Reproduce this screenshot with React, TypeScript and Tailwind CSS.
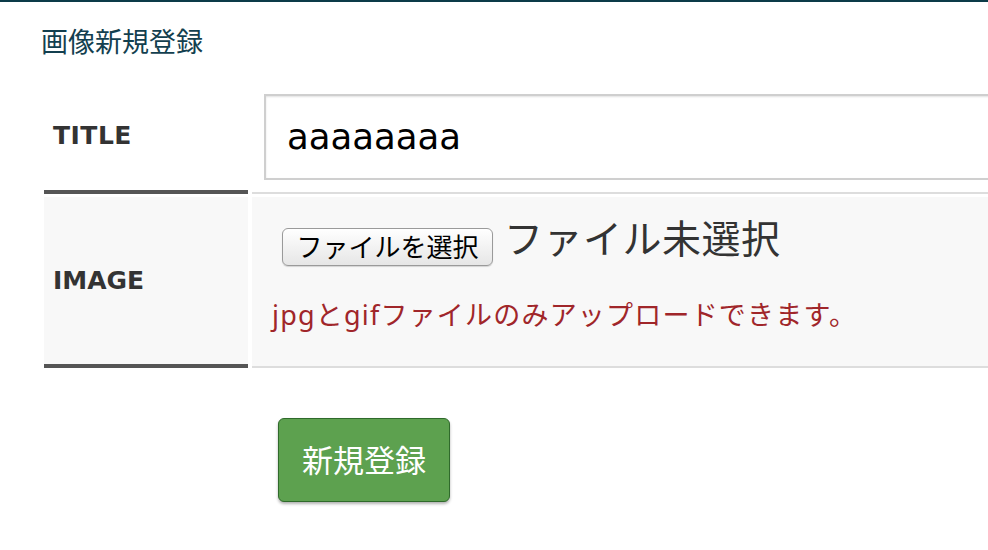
import React from "react";

const jp = { fontFamily: '"Noto Sans", "Noto Sans CJK JP", sans-serif' };

export default function App() {
  return (
    <div className="w-full h-[550px] overflow-hidden bg-white" style={jp}>
      <div className="h-[2px] bg-[#0c3b48]" />
      <div className="pl-[41px] pt-[26px] text-[27px] leading-[27px] text-[#133f4f] whitespace-nowrap">
        画像新規登録
      </div>

      <div className="ml-[44px] mt-[27px] w-[1200px]">
        {/* Row 1 */}
        <div className="flex h-[112px] gap-[4px]">
          <div className="w-[204px] shrink-0 border-b-4 border-[#555555] flex items-center pl-[9px]">
            <span
              className="text-[25px] font-bold text-[#333333] tracking-[0.5px]"
              style={{ fontFamily: '"DejaVu Sans", sans-serif' }}
            >
              TITLE
            </span>
          </div>
          <div className="flex-1 border-b-2 border-[#dddddd] pt-[12px] pl-[12px]">
            <div className="h-[86px] w-[900px] border-2 border-[#cfcfcf] bg-white shadow-[inset_0_1px_2px_rgba(0,0,0,0.12)] flex items-center pl-[21px]">
              <span
                className="text-[35.5px] text-black leading-none"
                style={{ fontFamily: '"DejaVu Sans", sans-serif' }}
              >
                aaaaaaaa
              </span>
            </div>
          </div>
        </div>

        {/* Row 2 */}
        <div className="flex h-[171px] gap-[4px] mt-[3px]">
          <div className="w-[204px] shrink-0 bg-[#f8f8f8] border-b-4 border-[#555555] flex items-center pl-[9px]">
            <span
              className="text-[25px] font-bold text-[#333333]"
              style={{ fontFamily: '"DejaVu Sans", sans-serif' }}
            >
              IMAGE
            </span>
          </div>
          <div className="flex-1 bg-[#f8f8f8] border-b-2 border-[#dddddd] pt-[21px] pl-[20px]">
            <div className="flex items-start">
              <div className="ml-[10px] mt-[10px] w-[211px] h-[38px] rounded-[6px] border border-[#9a9a9a] bg-gradient-to-b from-white to-[#e6e6e6] shadow-[0_1px_1px_rgba(0,0,0,0.15)] flex items-center justify-center text-[26px] leading-none text-black whitespace-nowrap">
                ファイルを選択
              </div>
              <div className="ml-[11px] text-[39px] leading-[39px] tracking-[0.5px] text-[#333333] whitespace-nowrap">
                ファイル未選択
              </div>
            </div>
            <div className="mt-[35px] text-[27px] leading-[27px] tracking-[1.2px] text-[#a0262a] whitespace-nowrap">
              jpgとgifファイルのみアップロードできます。
            </div>
          </div>
        </div>

        {/* Submit */}
        <div className="mt-[50px] ml-[234px]">
          <div className="w-[172px] h-[84px] rounded-[6px] border border-[#2f6a2b] bg-[#5da14f] shadow-[0_2px_3px_rgba(0,0,0,0.3)] flex items-center justify-center text-white text-[31px] leading-none whitespace-nowrap">
            新規登録
          </div>
        </div>
      </div>
    </div>
  );
}
